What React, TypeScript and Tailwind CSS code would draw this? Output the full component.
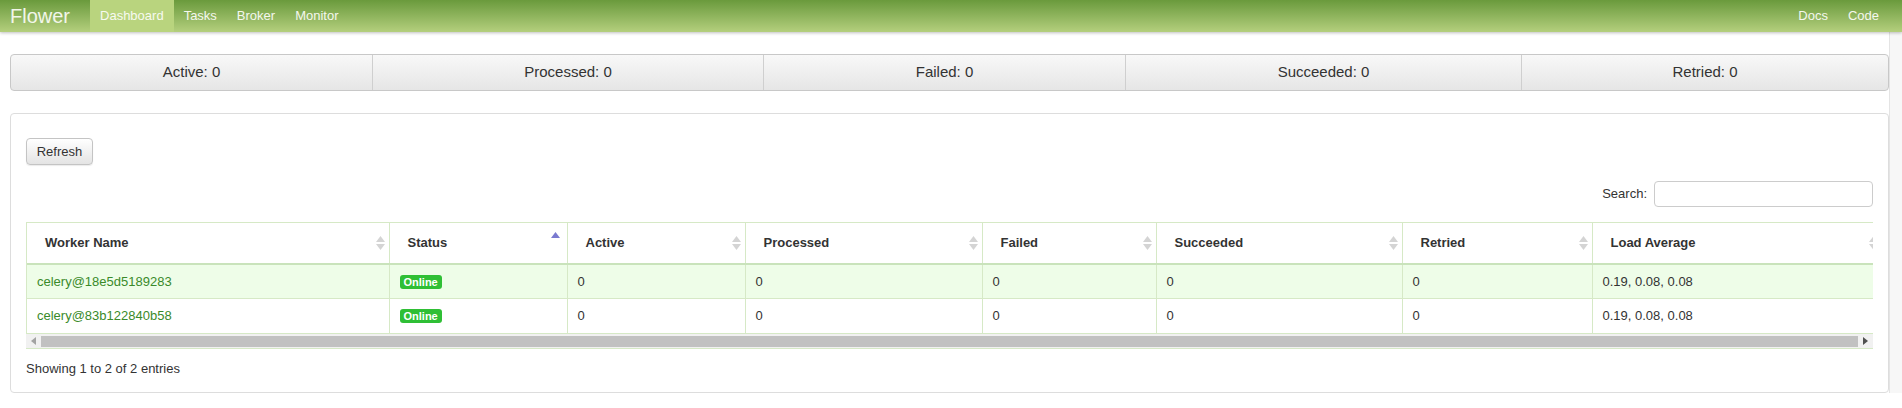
import React from 'react';

const stats = [
  { label: 'Active: 0', w: 'w-[361px]' },
  { label: 'Processed: 0', w: 'w-[391px]' },
  { label: 'Failed: 0', w: 'w-[362px]' },
  { label: 'Succeeded: 0', w: 'w-[396px]' },
  { label: 'Retried: 0', w: 'flex-1' },
];

const columns = [
  { name: 'Worker Name', w: 'w-[362px]' },
  { name: 'Status', w: 'w-[178px]', sorted: true },
  { name: 'Active', w: 'w-[178px]' },
  { name: 'Processed', w: 'w-[237px]' },
  { name: 'Failed', w: 'w-[174px]' },
  { name: 'Succeeded', w: 'w-[246px]' },
  { name: 'Retried', w: 'w-[190px]' },
  { name: 'Load Average', w: 'w-[290px]' },
];

const workers = [
  { name: 'celery@18e5d5189283', load: '0.19, 0.08, 0.08' },
  { name: 'celery@83b122840b58', load: '0.19, 0.08, 0.08' },
];

const SortIcon = ({ active }: { active?: boolean }) =>
  active ? (
    <svg width="9" height="12" viewBox="0 0 9 12" className="absolute right-[7px] top-[9px]">
      <path d="M4.5 0 L9 6 L0 6 Z" fill="#7a7ad0" />
    </svg>
  ) : (
    <svg width="9" height="14" viewBox="0 0 9 14" className="absolute right-[4px] top-[13px]">
      <path d="M4.5 0 L9 6 L0 6 Z" fill="#d4d4d4" />
      <path d="M0 8 L9 8 L4.5 14 Z" fill="#d4d4d4" />
    </svg>
  );

const App: React.FC = () => {
  return (
    <div className="w-[1902px] h-[408px] bg-white text-[#333] font-['Liberation_Sans',Arial,sans-serif] overflow-hidden">
      <nav className="h-8 flex items-stretch bg-gradient-to-b from-[#6a9a3c] to-[#b4cf7d] shadow-[0_1px_3px_rgba(0,0,0,0.25)] relative z-10">
        <div className="pl-[10px] pr-[20px] flex items-center text-[20px] text-[#f2f6ea]">Flower</div>
        <ul className="flex items-stretch text-[13px] text-[#f4f7ee]">
          <li className="px-[10px] flex items-center bg-[#b9d47e] text-[#f7faf0]">Dashboard</li>
          <li className="px-[10px] flex items-center">Tasks</li>
          <li className="px-[10px] flex items-center">Broker</li>
          <li className="px-[10px] flex items-center">Monitor</li>
        </ul>
        <ul className="ml-auto flex items-stretch text-[13px] text-[#f4f7ee] pr-[13px]">
          <li className="px-[10px] flex items-center">Docs</li>
          <li className="px-[10px] flex items-center">Code</li>
        </ul>
      </nav>

      <div className="flex">
        <div className="w-[1889px] pl-[10px]">
          <div className="mt-[22px] h-[37px] flex rounded-[4px] border border-[#c8c8c8] bg-gradient-to-b from-[#f8f8f8] to-[#e6e6e6] text-[15px] text-[#333]">
            {stats.map((s, i) => (
              <div
                key={s.label}
                className={`${s.w} flex items-center justify-center ${i > 0 ? 'border-l border-[#cfcfcf]' : ''}`}
              >
                {s.label}
              </div>
            ))}
          </div>

          <div className="mt-[22px] h-[280px] rounded-[4px] border border-[#dddddd] p-[15px] pt-[24px]">
            <button className="h-[27px] w-[67px] rounded-[4px] border border-[#c4c4c4] bg-gradient-to-b from-white to-[#e4e4e4] text-[13px] text-[#333] shadow-[0_1px_1px_rgba(0,0,0,0.08)]">
              Refresh
            </button>

            <div className="mt-[16px] flex justify-end items-center gap-[7px] text-[13px]">
              <span>Search:</span>
              <div className="w-[219px] h-[26px] rounded-[4px] border border-[#cccccc] bg-white" />
            </div>

            <div className="mt-[15px] w-[1847px] overflow-hidden border-l border-[#d6e9c6]">
              <table className="table-fixed border-collapse text-[13px] w-[1855px]">
                <thead>
                  <tr className="h-[41px]">
                    {columns.map((c) => (
                      <th
                        key={c.name}
                        className={`${c.w} relative text-left font-bold text-[#333] pl-[18px] border-t border-r border-[#d6e9c6] border-b-2 border-b-[#c9e3bb]`}
                      >
                        {c.name}
                        <SortIcon active={c.sorted} />
                      </th>
                    ))}
                  </tr>
                </thead>
                <tbody>
                  {workers.map((w, i) => (
                    <tr key={w.name} className={`h-[35px] ${i === 0 ? 'bg-[#eefde8]' : 'bg-white'}`}>
                      <td className="pl-[10px] text-[#3a8a2a] border-r border-b border-[#d6e9c6]">{w.name}</td>
                      <td className="pl-[10px] border-r border-b border-[#d6e9c6]">
                        <span className="inline-block rounded-[3px] bg-[#2fbf35] text-white text-[11px] font-bold leading-[14px] px-[4px]">
                          Online
                        </span>
                      </td>
                      {[0, 0, 0, 0, 0].map((v, j) => (
                        <td key={j} className="pl-[10px] border-r border-b border-[#d6e9c6]">
                          {v}
                        </td>
                      ))}
                      <td className="pl-[10px] border-b border-[#d6e9c6]">{w.load}</td>
                    </tr>
                  ))}
                </tbody>
              </table>
            </div>

            <div className="w-[1847px] h-[15px] flex items-center bg-[#f1f1f1] border-b border-[#d6e9c6]">
              <div className="w-[15px] flex justify-center">
                <svg width="5" height="8" viewBox="0 0 5 8">
                  <path d="M5 0 L0 4 L5 8 Z" fill="#a3a3a3" />
                </svg>
              </div>
              <div className="flex-1 h-[11px] bg-[#c1c1c1]" />
              <div className="w-[15px] flex justify-center">
                <svg width="5" height="8" viewBox="0 0 5 8">
                  <path d="M0 0 L5 4 L0 8 Z" fill="#505050" />
                </svg>
              </div>
            </div>

            <div className="mt-[10px] text-[13px] text-[#333]">Showing 1 to 2 of 2 entries</div>
          </div>
        </div>
        <div className="flex-1 bg-[#f7f7f7] border-l border-[#e4e4e4]" />
      </div>
    </div>
  );
};

export default App;
